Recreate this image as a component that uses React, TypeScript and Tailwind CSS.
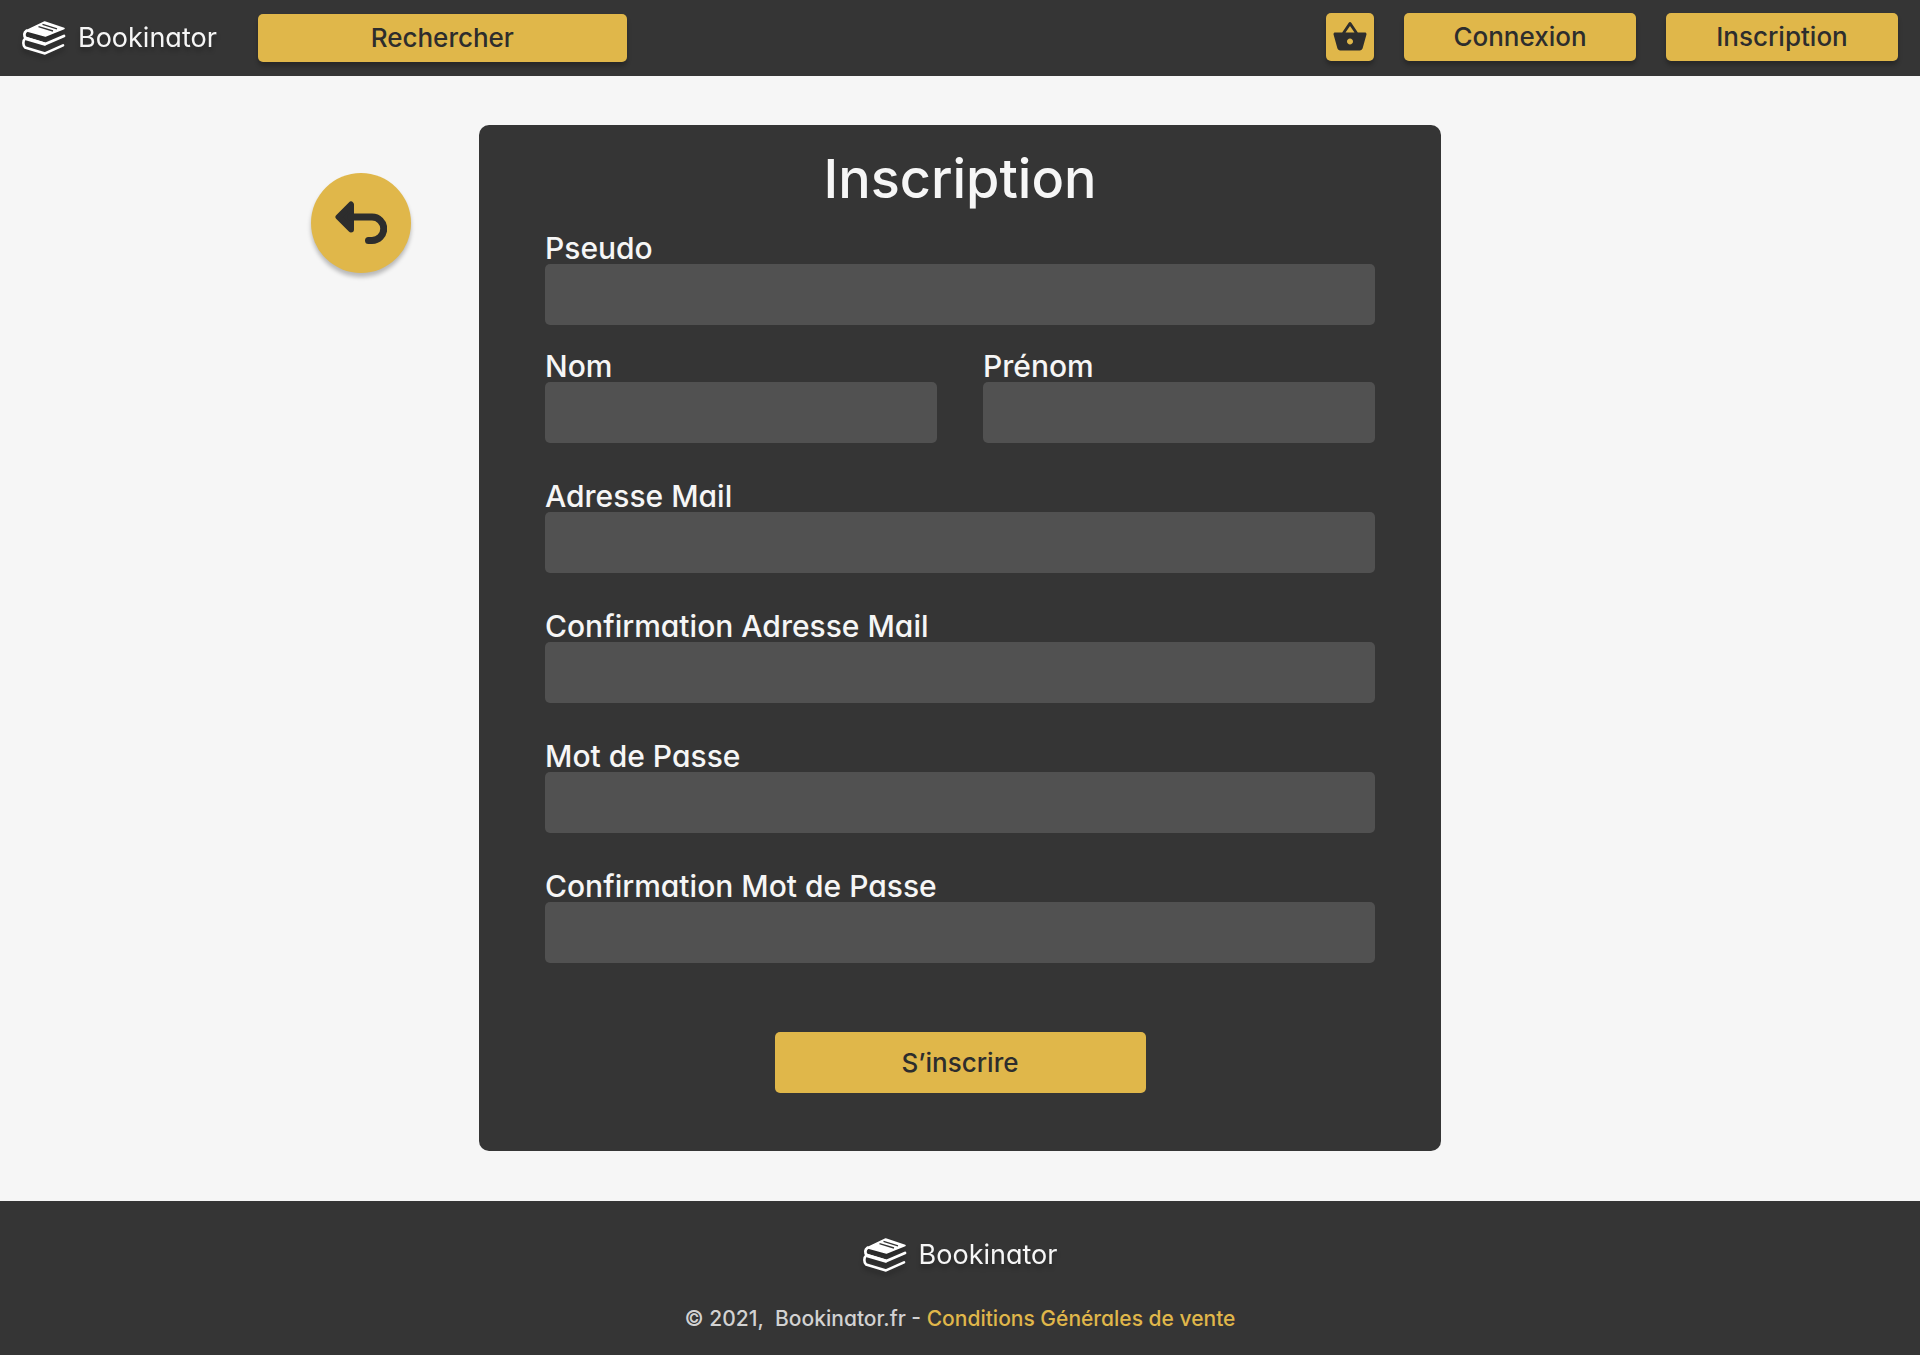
import React from 'react';
import { MdShoppingBasket } from 'react-icons/md';

function Logo() {
  return (
    <a href="#" className="flex items-center gap-3 text-[27px] leading-8 text-[#f6f6f6]">
      <svg viewBox="0 0 44 36" className="h-9 w-11 drop-shadow-[0_4px_2px_rgba(0,0,0,0.25)]" aria-hidden="true">
        {/* Top cover */}
        <path
          d="M22.7 2 L42 8.4 L23.4 16 L4.4 10.8 Z"
          fill="#fff"
          stroke="#fff"
          strokeWidth="1.6"
          strokeLinejoin="round"
        />
        <path d="M20.5 4.4 L35 8.8 M16.5 6.6 L31 11" stroke="#353535" strokeWidth="1.4" fill="none" />
        {/* Spines and page edges */}
        <path
          d="M4.6 10.8 C1.8 12.4 1.8 16 3.6 18 L23.4 24 L42 16"
          fill="none"
          stroke="#fff"
          strokeWidth="2.8"
          strokeLinecap="round"
          strokeLinejoin="round"
        />
        <path d="M3.6 16.6 L23.4 22.6 L23.4 26 L3.6 20.2 Z" fill="#fff" />
        <path
          d="M3 18.8 C0.8 20.6 0.8 25 3 27.4 L23 33.4 L41 25.4"
          fill="none"
          stroke="#fff"
          strokeWidth="2.6"
          strokeLinecap="round"
          strokeLinejoin="round"
        />
      </svg>
      <span className="drop-shadow-[0_4px_2px_rgba(0,0,0,0.25)]">Bookinator</span>
    </a>
  );
}

function Field({ id, label, type = 'text' }: { id: string; label: string; type?: string }) {
  return (
    <div className="flex min-w-0 flex-1 flex-col">
      <label htmlFor={id} className="text-[30px] leading-8 font-medium">
        {label}
      </label>
      <input id={id} type={type} className="h-[61px] w-full rounded-[5px] bg-[#515151] px-4 text-2xl outline-none" />
    </div>
  );
}

const headerButton =
  'flex h-12 items-center justify-center rounded-[5px] bg-[#e0b74a] text-[26px] leading-8 font-medium shadow-[0_4px_4px_rgba(0,0,0,0.25)]';

export default function App() {
  return (
    <div className="flex min-h-screen flex-col bg-[#f6f6f6] font-['Inter','Liberation_Sans',sans-serif] text-[#2d2d2d] [font-feature-settings:'cv11']">
      <header className="flex h-[76px] items-center bg-[#353535] px-[22px]">
        <Logo />
        <button type="button" className={`${headerButton} ml-[41px] w-[369px]`}>
          Rechercher
        </button>
        <nav className="ml-auto flex gap-[30px] pb-0.5">
          <button type="button" aria-label="Panier" className={`${headerButton} w-12`}>
            <MdShoppingBasket size={36} />
          </button>
          <button type="button" className={`${headerButton} w-[232px]`}>
            Connexion
          </button>
          <button type="button" className={`${headerButton} w-[232px]`}>
            Inscription
          </button>
        </nav>
      </header>

      <main className="grid flex-1 grid-cols-[1fr_962px_1fr] items-start pt-[49px] pb-[50px]">
        <div className="flex justify-end pt-12 pr-[68px]">
          <button
            type="button"
            aria-label="Retour"
            className="flex size-[100px] items-center justify-center rounded-full bg-[#e0b74a] shadow-[0_4px_4px_rgba(0,0,0,0.25)]"
          >
            <svg viewBox="0 0 52 44" className="h-11 w-[52px]" fill="none" stroke="currentColor" strokeLinecap="round" strokeLinejoin="round">
              <path d="M3.5 16 L16 3.5 V28.5 Z" fill="currentColor" strokeWidth="6" />
              <path d="M16 16 H37 A11.5 11.5 0 0 1 37 39.5 H33.5" strokeWidth="7" />
            </svg>
          </button>
        </div>

        <form className="rounded-[10px] bg-[#353535] px-[66px] pt-[22px] pb-[58px] text-[#f6f6f6]">
          <h1 className="text-center text-[54px] leading-[64px] font-medium">Inscription</h1>
          <div className="mt-[21px] flex flex-col gap-[37px]">
            <div className="flex flex-col gap-[25px]">
              <Field id="pseudo" label="Pseudo" />
              <div className="flex gap-[46px]">
                <Field id="nom" label="Nom" />
                <Field id="prenom" label="Prénom" />
              </div>
            </div>
            <Field id="mail" label="Adresse Mail" type="email" />
            <Field id="mail-confirm" label="Confirmation Adresse Mail" type="email" />
            <Field id="password" label="Mot de Passe" type="password" />
            <Field id="password-confirm" label="Confirmation Mot de Passe" type="password" />
          </div>
          <button
            type="submit"
            className="mx-auto mt-[69px] flex h-[61px] w-[371px] items-center justify-center rounded-[5px] bg-[#e0b74a] text-[26px] leading-8 font-medium text-[#2d2d2d]"
          >
            S’inscrire
          </button>
        </form>
      </main>

      <footer className="flex flex-col items-center gap-8 bg-[#353535] pt-9 pb-[22px]">
        <Logo />
        <p className="text-[21px] leading-7 font-medium text-[#d2d2d2]">
          © 2021,&nbsp; Bookinator.fr -{' '}
          <a href="#" className="text-[#e0b74a]">
            Conditions Générales de vente
          </a>
        </p>
      </footer>
    </div>
  );
}
